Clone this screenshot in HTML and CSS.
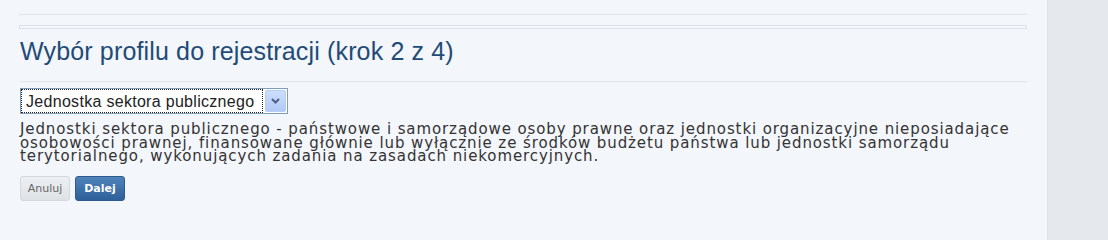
FILE: index.html
```html
<!DOCTYPE html>
<html lang="pl">
<head>
<meta charset="utf-8">
<link rel="stylesheet" href="styles.css">
</head>
<body>
<div class="layout">
  <main class="main">
    <div class="rule"></div>
    <div class="rule-box"></div>
    <h1 class="title">Wybór profilu do rejestracji (krok 2 z 4)</h1>
    <div class="rule rule-under"></div>
    <div class="select">
      <span class="select-value">Jednostka sektora publicznego</span>
      <span class="select-btn">
        <svg width="9" height="6" viewBox="0 0 9 6"><path d="M1 1 L4.5 4.5 L8 1" fill="none" stroke="#4d6185" stroke-width="2"/></svg>
      </span>
    </div>
    <p class="desc">Jednostki sektora publicznego - państwowe i samorządowe osoby prawne oraz jednostki organizacyjne nieposiadające osobowości prawnej, finansowane głównie lub wyłącznie ze środków budżetu państwa lub jednostki samorządu terytorialnego, wykonujących zadania na zasadach niekomercyjnych.</p>
    <div class="actions">
      <button class="btn btn-cancel">Anuluj</button>
      <button class="btn btn-next">Dalej</button>
    </div>
  </main>
  <aside class="side"></aside>
</div>
</body>
</html>
```
FILE: styles.css
```css
html, body {
  margin: 0;
  padding: 0;
}
body {
  font-family: "Liberation Sans", Arial, sans-serif;
  background: #e5e9ee;
}
.layout {
  display: flex;
  min-height: 100vh;
}
.main {
  box-sizing: border-box;
  width: 1048px;
  padding: 0 20px 0 20px;
  background: #f3f6fb;
  border-right: 1px solid #dde3ea;
  display: flex;
  flex-direction: column;
  align-items: flex-start;
}
.side {
  flex: 1;
  background: #e5e9ee;
}
.rule {
  align-self: stretch;
  height: 1px;
  background: #dfe4eb;
  margin-top: 14px;
  margin-left: -1px;
}
.rule-box {
  align-self: stretch;
  height: 2px;
  border: 1px solid #dce2ea;
  margin-top: 10px;
  margin-left: -1px;
}
.title {
  margin: 8px 0 0 0;
  font-size: 25px;
  letter-spacing: 0.15px;
  line-height: 28px;
  font-weight: normal;
  color: #1f4b77;
}
.rule-under {
  margin-top: 16px;
  margin-left: 0;
}
.select {
  margin-top: 6px;
  width: 266px;
  height: 24px;
  border: 1px solid #7f9db9;
  background: #fff;
  display: flex;
  align-items: stretch;
}
.select-value {
  flex: 1;
  border: 1px dotted #222;
  padding-left: 4px;
  font-size: 16px;
  letter-spacing: 0.3px;
  line-height: 24px;
  color: #222;
}
.select-btn {
  width: 19px;
  margin: 1px 1px 1px 2px;
  border: 1px solid #b8cdf5;
  background: linear-gradient(#cddefd, #b2c9f7);
  border-radius: 2px;
  display: flex;
  align-items: center;
  justify-content: center;
}
.desc {
  margin: 9px 0 0 0;
  font-family: "DejaVu Sans", Verdana, sans-serif;
  font-size: 15px;
  letter-spacing: 0.9px;
  line-height: 13.5px;
  color: #333;
}
.actions {
  display: flex;
  gap: 5px;
  margin-top: 12px;
}
.btn {
  width: 50px;
  height: 25px;
  border-radius: 3px;
  font-family: "DejaVu Sans", Verdana, sans-serif;
  font-size: 11px;
  padding: 0;
  cursor: pointer;
}
.btn-cancel {
  border: 1px solid #d3d9de;
  background: linear-gradient(#edf0f2, #dde2e5);
  color: #666;
}
.btn-next {
  border: 1px solid #2b5a8c;
  background: linear-gradient(#4f82bb, #2e5f98);
  color: #fff;
  font-weight: bold;
}
```
